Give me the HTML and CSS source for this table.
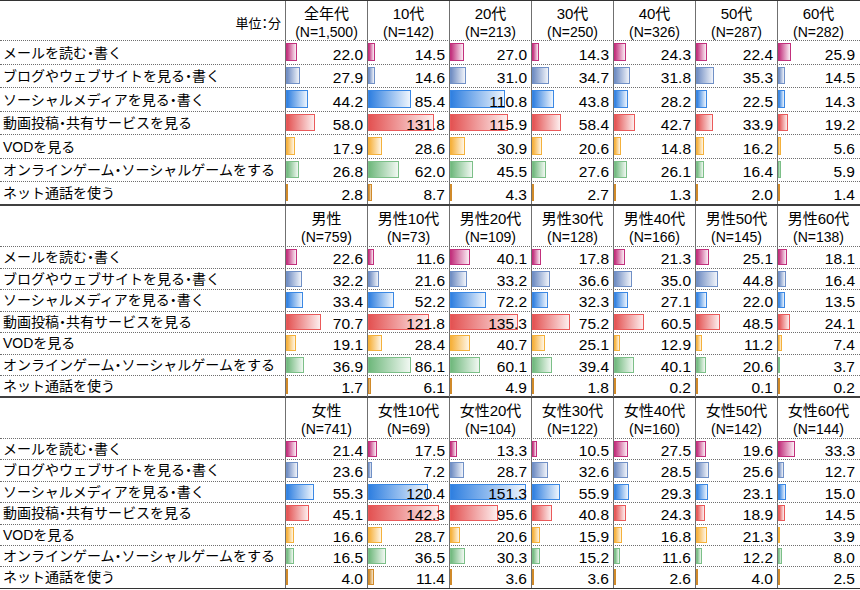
FILE: index.html
```html
<!DOCTYPE html>
<html lang="ja">
<head>
<meta charset="utf-8">
<title>利用時間</title>
<link rel="stylesheet" href="styles.css">
</head>
<body>
<div class="tbl">
  <!-- Section 1 -->
  <div class="row hd h1">
    <div class="unit">単位：分</div>
    <div class="hc"><div class="t1">全年代</div><div class="t2">(N=1,500)</div></div>
    <div class="hc"><div class="t1">10代</div><div class="t2">(N=142)</div></div>
    <div class="hc"><div class="t1">20代</div><div class="t2">(N=213)</div></div>
    <div class="hc"><div class="t1">30代</div><div class="t2">(N=250)</div></div>
    <div class="hc"><div class="t1">40代</div><div class="t2">(N=326)</div></div>
    <div class="hc"><div class="t1">50代</div><div class="t2">(N=287)</div></div>
    <div class="hc"><div class="t1">60代</div><div class="t2">(N=282)</div></div>
  </div>
  <div class="row s1">
    <div class="lb">メールを読む<span class="dot">・</span>書く</div>
    <div class="c"><div class="bar b1" style="width:11px"></div><span class="v">22.0</span></div>
    <div class="c"><div class="bar b1" style="width:7.25px"></div><span class="v">14.5</span></div>
    <div class="c"><div class="bar b1" style="width:13.5px"></div><span class="v">27.0</span></div>
    <div class="c"><div class="bar b1" style="width:7.15px"></div><span class="v">14.3</span></div>
    <div class="c"><div class="bar b1" style="width:12.15px"></div><span class="v">24.3</span></div>
    <div class="c"><div class="bar b1" style="width:11.2px"></div><span class="v">22.4</span></div>
    <div class="c"><div class="bar b1" style="width:12.95px"></div><span class="v">25.9</span></div>
  </div>
  <div class="row s1">
    <div class="lb">ブログやウェブサイトを見る<span class="dot">・</span>書く</div>
    <div class="c"><div class="bar b2" style="width:13.95px"></div><span class="v">27.9</span></div>
    <div class="c"><div class="bar b2" style="width:7.3px"></div><span class="v">14.6</span></div>
    <div class="c"><div class="bar b2" style="width:15.5px"></div><span class="v">31.0</span></div>
    <div class="c"><div class="bar b2" style="width:17.35px"></div><span class="v">34.7</span></div>
    <div class="c"><div class="bar b2" style="width:15.9px"></div><span class="v">31.8</span></div>
    <div class="c"><div class="bar b2" style="width:17.65px"></div><span class="v">35.3</span></div>
    <div class="c"><div class="bar b2" style="width:7.25px"></div><span class="v">14.5</span></div>
  </div>
  <div class="row s1">
    <div class="lb">ソーシャルメディアを見る<span class="dot">・</span>書く</div>
    <div class="c"><div class="bar b3" style="width:22.1px"></div><span class="v">44.2</span></div>
    <div class="c"><div class="bar b3" style="width:42.7px"></div><span class="v">85.4</span></div>
    <div class="c"><div class="bar b3" style="width:55.4px"></div><span class="v">110.8</span></div>
    <div class="c"><div class="bar b3" style="width:21.9px"></div><span class="v">43.8</span></div>
    <div class="c"><div class="bar b3" style="width:14.1px"></div><span class="v">28.2</span></div>
    <div class="c"><div class="bar b3" style="width:11.25px"></div><span class="v">22.5</span></div>
    <div class="c"><div class="bar b3" style="width:7.15px"></div><span class="v">14.3</span></div>
  </div>
  <div class="row s1">
    <div class="lb">動画投稿<span class="dot">・</span>共有サービスを見る</div>
    <div class="c"><div class="bar b4" style="width:29px"></div><span class="v">58.0</span></div>
    <div class="c"><div class="bar b4" style="width:65.9px"></div><span class="v">131.8</span></div>
    <div class="c"><div class="bar b4" style="width:57.95px"></div><span class="v">115.9</span></div>
    <div class="c"><div class="bar b4" style="width:29.2px"></div><span class="v">58.4</span></div>
    <div class="c"><div class="bar b4" style="width:21.35px"></div><span class="v">42.7</span></div>
    <div class="c"><div class="bar b4" style="width:16.95px"></div><span class="v">33.9</span></div>
    <div class="c"><div class="bar b4" style="width:9.6px"></div><span class="v">19.2</span></div>
  </div>
  <div class="row s1">
    <div class="lb">VODを見る</div>
    <div class="c"><div class="bar b5" style="width:8.95px"></div><span class="v">17.9</span></div>
    <div class="c"><div class="bar b5" style="width:14.3px"></div><span class="v">28.6</span></div>
    <div class="c"><div class="bar b5" style="width:15.45px"></div><span class="v">30.9</span></div>
    <div class="c"><div class="bar b5" style="width:10.3px"></div><span class="v">20.6</span></div>
    <div class="c"><div class="bar b5" style="width:7.4px"></div><span class="v">14.8</span></div>
    <div class="c"><div class="bar b5" style="width:8.1px"></div><span class="v">16.2</span></div>
    <div class="c"><div class="bar b5" style="width:2.8px"></div><span class="v">5.6</span></div>
  </div>
  <div class="row s1">
    <div class="lb">オンラインゲーム<span class="dot">・</span>ソーシャルゲームをする</div>
    <div class="c"><div class="bar b6" style="width:13.4px"></div><span class="v">26.8</span></div>
    <div class="c"><div class="bar b6" style="width:31px"></div><span class="v">62.0</span></div>
    <div class="c"><div class="bar b6" style="width:22.75px"></div><span class="v">45.5</span></div>
    <div class="c"><div class="bar b6" style="width:13.8px"></div><span class="v">27.6</span></div>
    <div class="c"><div class="bar b6" style="width:13.05px"></div><span class="v">26.1</span></div>
    <div class="c"><div class="bar b6" style="width:8.2px"></div><span class="v">16.4</span></div>
    <div class="c"><div class="bar b6" style="width:2.95px"></div><span class="v">5.9</span></div>
  </div>
  <div class="row s1 last">
    <div class="lb">ネット通話を使う</div>
    <div class="c"><div class="bar b7" style="width:1.4px"></div><span class="v">2.8</span></div>
    <div class="c"><div class="bar b7" style="width:4.35px"></div><span class="v">8.7</span></div>
    <div class="c"><div class="bar b7" style="width:2.15px"></div><span class="v">4.3</span></div>
    <div class="c"><div class="bar b7" style="width:1.35px"></div><span class="v">2.7</span></div>
    <div class="c"><div class="bar b7" style="width:0.65px"></div><span class="v">1.3</span></div>
    <div class="c"><div class="bar b7" style="width:1px"></div><span class="v">2.0</span></div>
    <div class="c"><div class="bar b7" style="width:0.7px"></div><span class="v">1.4</span></div>
  </div>

  <!-- Section 2 -->
  <div class="row hd">
    <div class="unit"></div>
    <div class="hc"><div class="t1">男性</div><div class="t2">(N=759)</div></div>
    <div class="hc"><div class="t1">男性10代</div><div class="t2">(N=73)</div></div>
    <div class="hc"><div class="t1">男性20代</div><div class="t2">(N=109)</div></div>
    <div class="hc"><div class="t1">男性30代</div><div class="t2">(N=128)</div></div>
    <div class="hc"><div class="t1">男性40代</div><div class="t2">(N=166)</div></div>
    <div class="hc"><div class="t1">男性50代</div><div class="t2">(N=145)</div></div>
    <div class="hc"><div class="t1">男性60代</div><div class="t2">(N=138)</div></div>
  </div>
  <div class="row s2">
    <div class="lb">メールを読む<span class="dot">・</span>書く</div>
    <div class="c"><div class="bar b1" style="width:11.3px"></div><span class="v">22.6</span></div>
    <div class="c"><div class="bar b1" style="width:5.8px"></div><span class="v">11.6</span></div>
    <div class="c"><div class="bar b1" style="width:20.05px"></div><span class="v">40.1</span></div>
    <div class="c"><div class="bar b1" style="width:8.9px"></div><span class="v">17.8</span></div>
    <div class="c"><div class="bar b1" style="width:10.65px"></div><span class="v">21.3</span></div>
    <div class="c"><div class="bar b1" style="width:12.55px"></div><span class="v">25.1</span></div>
    <div class="c"><div class="bar b1" style="width:9.05px"></div><span class="v">18.1</span></div>
  </div>
  <div class="row s2">
    <div class="lb">ブログやウェブサイトを見る<span class="dot">・</span>書く</div>
    <div class="c"><div class="bar b2" style="width:16.1px"></div><span class="v">32.2</span></div>
    <div class="c"><div class="bar b2" style="width:10.8px"></div><span class="v">21.6</span></div>
    <div class="c"><div class="bar b2" style="width:16.6px"></div><span class="v">33.2</span></div>
    <div class="c"><div class="bar b2" style="width:18.3px"></div><span class="v">36.6</span></div>
    <div class="c"><div class="bar b2" style="width:17.5px"></div><span class="v">35.0</span></div>
    <div class="c"><div class="bar b2" style="width:22.4px"></div><span class="v">44.8</span></div>
    <div class="c"><div class="bar b2" style="width:8.2px"></div><span class="v">16.4</span></div>
  </div>
  <div class="row s2">
    <div class="lb">ソーシャルメディアを見る<span class="dot">・</span>書く</div>
    <div class="c"><div class="bar b3" style="width:16.7px"></div><span class="v">33.4</span></div>
    <div class="c"><div class="bar b3" style="width:26.1px"></div><span class="v">52.2</span></div>
    <div class="c"><div class="bar b3" style="width:36.1px"></div><span class="v">72.2</span></div>
    <div class="c"><div class="bar b3" style="width:16.15px"></div><span class="v">32.3</span></div>
    <div class="c"><div class="bar b3" style="width:13.55px"></div><span class="v">27.1</span></div>
    <div class="c"><div class="bar b3" style="width:11px"></div><span class="v">22.0</span></div>
    <div class="c"><div class="bar b3" style="width:6.75px"></div><span class="v">13.5</span></div>
  </div>
  <div class="row s2">
    <div class="lb">動画投稿<span class="dot">・</span>共有サービスを見る</div>
    <div class="c"><div class="bar b4" style="width:35.35px"></div><span class="v">70.7</span></div>
    <div class="c"><div class="bar b4" style="width:60.9px"></div><span class="v">121.8</span></div>
    <div class="c"><div class="bar b4" style="width:67.65px"></div><span class="v">135.3</span></div>
    <div class="c"><div class="bar b4" style="width:37.6px"></div><span class="v">75.2</span></div>
    <div class="c"><div class="bar b4" style="width:30.25px"></div><span class="v">60.5</span></div>
    <div class="c"><div class="bar b4" style="width:24.25px"></div><span class="v">48.5</span></div>
    <div class="c"><div class="bar b4" style="width:12.05px"></div><span class="v">24.1</span></div>
  </div>
  <div class="row s2">
    <div class="lb">VODを見る</div>
    <div class="c"><div class="bar b5" style="width:9.55px"></div><span class="v">19.1</span></div>
    <div class="c"><div class="bar b5" style="width:14.2px"></div><span class="v">28.4</span></div>
    <div class="c"><div class="bar b5" style="width:20.35px"></div><span class="v">40.7</span></div>
    <div class="c"><div class="bar b5" style="width:12.55px"></div><span class="v">25.1</span></div>
    <div class="c"><div class="bar b5" style="width:6.45px"></div><span class="v">12.9</span></div>
    <div class="c"><div class="bar b5" style="width:5.6px"></div><span class="v">11.2</span></div>
    <div class="c"><div class="bar b5" style="width:3.7px"></div><span class="v">7.4</span></div>
  </div>
  <div class="row s2">
    <div class="lb">オンラインゲーム<span class="dot">・</span>ソーシャルゲームをする</div>
    <div class="c"><div class="bar b6" style="width:18.45px"></div><span class="v">36.9</span></div>
    <div class="c"><div class="bar b6" style="width:43.05px"></div><span class="v">86.1</span></div>
    <div class="c"><div class="bar b6" style="width:30.05px"></div><span class="v">60.1</span></div>
    <div class="c"><div class="bar b6" style="width:19.7px"></div><span class="v">39.4</span></div>
    <div class="c"><div class="bar b6" style="width:20.05px"></div><span class="v">40.1</span></div>
    <div class="c"><div class="bar b6" style="width:10.3px"></div><span class="v">20.6</span></div>
    <div class="c"><div class="bar b6" style="width:1.85px"></div><span class="v">3.7</span></div>
  </div>
  <div class="row s2 last">
    <div class="lb">ネット通話を使う</div>
    <div class="c"><div class="bar b7" style="width:0.85px"></div><span class="v">1.7</span></div>
    <div class="c"><div class="bar b7" style="width:3.05px"></div><span class="v">6.1</span></div>
    <div class="c"><div class="bar b7" style="width:2.45px"></div><span class="v">4.9</span></div>
    <div class="c"><div class="bar b7" style="width:0.9px"></div><span class="v">1.8</span></div>
    <div class="c"><div class="bar b7" style="width:0.1px"></div><span class="v">0.2</span></div>
    <div class="c"><div class="bar b7" style="width:0.05px"></div><span class="v">0.1</span></div>
    <div class="c"><div class="bar b7" style="width:0.1px"></div><span class="v">0.2</span></div>
  </div>

  <!-- Section 3 -->
  <div class="row hd">
    <div class="unit"></div>
    <div class="hc"><div class="t1">女性</div><div class="t2">(N=741)</div></div>
    <div class="hc"><div class="t1">女性10代</div><div class="t2">(N=69)</div></div>
    <div class="hc"><div class="t1">女性20代</div><div class="t2">(N=104)</div></div>
    <div class="hc"><div class="t1">女性30代</div><div class="t2">(N=122)</div></div>
    <div class="hc"><div class="t1">女性40代</div><div class="t2">(N=160)</div></div>
    <div class="hc"><div class="t1">女性50代</div><div class="t2">(N=142)</div></div>
    <div class="hc"><div class="t1">女性60代</div><div class="t2">(N=144)</div></div>
  </div>
  <div class="row s3">
    <div class="lb">メールを読む<span class="dot">・</span>書く</div>
    <div class="c"><div class="bar b1" style="width:10.7px"></div><span class="v">21.4</span></div>
    <div class="c"><div class="bar b1" style="width:8.75px"></div><span class="v">17.5</span></div>
    <div class="c"><div class="bar b1" style="width:6.65px"></div><span class="v">13.3</span></div>
    <div class="c"><div class="bar b1" style="width:5.25px"></div><span class="v">10.5</span></div>
    <div class="c"><div class="bar b1" style="width:13.75px"></div><span class="v">27.5</span></div>
    <div class="c"><div class="bar b1" style="width:9.8px"></div><span class="v">19.6</span></div>
    <div class="c"><div class="bar b1" style="width:16.65px"></div><span class="v">33.3</span></div>
  </div>
  <div class="row s3">
    <div class="lb">ブログやウェブサイトを見る<span class="dot">・</span>書く</div>
    <div class="c"><div class="bar b2" style="width:11.8px"></div><span class="v">23.6</span></div>
    <div class="c"><div class="bar b2" style="width:3.6px"></div><span class="v">7.2</span></div>
    <div class="c"><div class="bar b2" style="width:14.35px"></div><span class="v">28.7</span></div>
    <div class="c"><div class="bar b2" style="width:16.3px"></div><span class="v">32.6</span></div>
    <div class="c"><div class="bar b2" style="width:14.25px"></div><span class="v">28.5</span></div>
    <div class="c"><div class="bar b2" style="width:12.8px"></div><span class="v">25.6</span></div>
    <div class="c"><div class="bar b2" style="width:6.35px"></div><span class="v">12.7</span></div>
  </div>
  <div class="row s3">
    <div class="lb">ソーシャルメディアを見る<span class="dot">・</span>書く</div>
    <div class="c"><div class="bar b3" style="width:27.65px"></div><span class="v">55.3</span></div>
    <div class="c"><div class="bar b3" style="width:60.2px"></div><span class="v">120.4</span></div>
    <div class="c"><div class="bar b3" style="width:75.65px"></div><span class="v">151.3</span></div>
    <div class="c"><div class="bar b3" style="width:27.95px"></div><span class="v">55.9</span></div>
    <div class="c"><div class="bar b3" style="width:14.65px"></div><span class="v">29.3</span></div>
    <div class="c"><div class="bar b3" style="width:11.55px"></div><span class="v">23.1</span></div>
    <div class="c"><div class="bar b3" style="width:7.5px"></div><span class="v">15.0</span></div>
  </div>
  <div class="row s3">
    <div class="lb">動画投稿<span class="dot">・</span>共有サービスを見る</div>
    <div class="c"><div class="bar b4" style="width:22.55px"></div><span class="v">45.1</span></div>
    <div class="c"><div class="bar b4" style="width:71.15px"></div><span class="v">142.3</span></div>
    <div class="c"><div class="bar b4" style="width:47.8px"></div><span class="v">95.6</span></div>
    <div class="c"><div class="bar b4" style="width:20.4px"></div><span class="v">40.8</span></div>
    <div class="c"><div class="bar b4" style="width:12.15px"></div><span class="v">24.3</span></div>
    <div class="c"><div class="bar b4" style="width:9.45px"></div><span class="v">18.9</span></div>
    <div class="c"><div class="bar b4" style="width:7.25px"></div><span class="v">14.5</span></div>
  </div>
  <div class="row s3">
    <div class="lb">VODを見る</div>
    <div class="c"><div class="bar b5" style="width:8.3px"></div><span class="v">16.6</span></div>
    <div class="c"><div class="bar b5" style="width:14.35px"></div><span class="v">28.7</span></div>
    <div class="c"><div class="bar b5" style="width:10.3px"></div><span class="v">20.6</span></div>
    <div class="c"><div class="bar b5" style="width:7.95px"></div><span class="v">15.9</span></div>
    <div class="c"><div class="bar b5" style="width:8.4px"></div><span class="v">16.8</span></div>
    <div class="c"><div class="bar b5" style="width:10.65px"></div><span class="v">21.3</span></div>
    <div class="c"><div class="bar b5" style="width:1.95px"></div><span class="v">3.9</span></div>
  </div>
  <div class="row s3">
    <div class="lb">オンラインゲーム<span class="dot">・</span>ソーシャルゲームをする</div>
    <div class="c"><div class="bar b6" style="width:8.25px"></div><span class="v">16.5</span></div>
    <div class="c"><div class="bar b6" style="width:18.25px"></div><span class="v">36.5</span></div>
    <div class="c"><div class="bar b6" style="width:15.15px"></div><span class="v">30.3</span></div>
    <div class="c"><div class="bar b6" style="width:7.6px"></div><span class="v">15.2</span></div>
    <div class="c"><div class="bar b6" style="width:5.8px"></div><span class="v">11.6</span></div>
    <div class="c"><div class="bar b6" style="width:6.1px"></div><span class="v">12.2</span></div>
    <div class="c"><div class="bar b6" style="width:4px"></div><span class="v">8.0</span></div>
  </div>
  <div class="row s3 end">
    <div class="lb">ネット通話を使う</div>
    <div class="c"><div class="bar b7" style="width:2px"></div><span class="v">4.0</span></div>
    <div class="c"><div class="bar b7" style="width:5.7px"></div><span class="v">11.4</span></div>
    <div class="c"><div class="bar b7" style="width:1.8px"></div><span class="v">3.6</span></div>
    <div class="c"><div class="bar b7" style="width:1.8px"></div><span class="v">3.6</span></div>
    <div class="c"><div class="bar b7" style="width:1.3px"></div><span class="v">2.6</span></div>
    <div class="c"><div class="bar b7" style="width:2px"></div><span class="v">4.0</span></div>
    <div class="c"><div class="bar b7" style="width:1.25px"></div><span class="v">2.5</span></div>
  </div>
</div>
</body>
</html>
```

FILE: styles.css
```css
html, body {
  margin: 0;
  padding: 0;
  background: #fff;
}

body {
  font-family: "Liberation Sans", "Noto Sans CJK JP", sans-serif;
  color: #000;
}

.tbl {
  width: 860px;
  border-top: 1px solid #333;
}

.row {
  display: grid;
  grid-template-columns: 285px repeat(7, 82px);
  box-sizing: border-box;
  border-bottom: 1px dotted #6e6e6e;
}

.row.s1 { height: 23.57px; }
.row.s2 { height: 21.57px; }
.row.s3 { height: 21.43px; }

.row.hd { height: 41px; }
.row.hd.h1 { height: 40px; }

.row.last { border-bottom: 2px solid #404040; }
.row.end { border-bottom: 1px solid #333; }

.unit {
  display: flex;
  align-items: center;
  justify-content: flex-end;
  padding: 3px 4px 0 0;
  font-size: 13px;
  font-feature-settings: "palt";
}

.hc {
  border-left: 1px solid #707070;
  text-align: center;
  padding-top: 4px;
  line-height: 18px;
  white-space: nowrap;
}

.hc .t1 { font-size: 15px; }
.hc .t2 { font-size: 14px; }

.lb {
  display: flex;
  align-items: flex-end;
  padding: 0 0 1px 3px;
  font-size: 14px;
  line-height: 20px;
  white-space: nowrap;
}

.dot {
  font-feature-settings: "palt";
}

.c {
  display: grid;
  border-left: 1px solid #707070;
  min-width: 0;
}

.c > * {
  grid-area: 1 / 1;
}

.bar {
  justify-self: start;
  align-self: stretch;
  margin: 2px 0 3px 0;
  box-sizing: border-box;
  border: 1px solid;
}

.v {
  justify-self: end;
  align-self: end;
  padding-right: 4px;
  font-size: 15.5px;
  line-height: 18px;
}

.b1 { border-color: #c2307c; background: linear-gradient(to right, #c2307c, #fbeef5); }
.b2 { border-color: #7090c6; background: linear-gradient(to right, #6f8cc2, #f1f4fa); }
.b3 { border-color: #3a88e4; background: linear-gradient(to right, #2f7fe0, #eef5fd); }
.b4 { border-color: #ea5a5a; background: linear-gradient(to right, #e35252, #fdeeee); }
.b5 { border-color: #f4b13c; background: linear-gradient(to right, #f6b03a, #fff6e6); }
.b6 { border-color: #7cbf88; background: linear-gradient(to right, #6fb87c, #f1f8f2); }
.b7 { border-color: #d08a2a; background: linear-gradient(to right, #c98422, #f7e6cc); }
```
